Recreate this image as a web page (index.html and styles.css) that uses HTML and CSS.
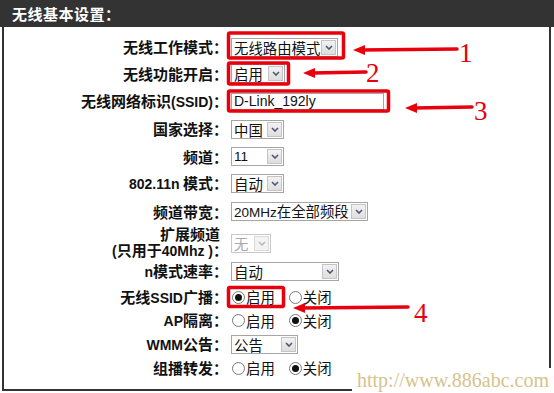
FILE: index.html
```html
<!DOCTYPE html>
<html lang="zh-CN">
<head>
<meta charset="utf-8">
<title>无线基本设置</title>
<link rel="stylesheet" href="styles.css">
</head>
<body>
<div class="page">
  <div class="hdr">无线基本设置：</div>
  <div class="panel">
    <div class="row r26">
      <div class="lbl">无线工作模式：</div>
      <div class="ctl"><div class="sel w107"><span class="val">无线路由模式</span><span class="btn"><svg viewBox="0 0 8 5"><path d="M1 1l3 3 3-3"/></svg></span></div></div>
    </div>
    <div class="row r27">
      <div class="lbl">无线功能开启：</div>
      <div class="ctl"><div class="sel w54"><span class="val">启用</span><span class="btn"><svg viewBox="0 0 8 5"><path d="M1 1l3 3 3-3"/></svg></span></div></div>
    </div>
    <div class="row r28">
      <div class="lbl">无线网络标识<span class="la">(SSID)</span>：</div>
      <div class="ctl"><div class="inp"><span class="lt">D-Link_192ly</span></div></div>
    </div>
    <div class="row r28">
      <div class="lbl">国家选择：</div>
      <div class="ctl"><div class="sel w53"><span class="val">中国</span><span class="btn"><svg viewBox="0 0 8 5"><path d="M1 1l3 3 3-3"/></svg></span></div></div>
    </div>
    <div class="row r27">
      <div class="lbl">频道：</div>
      <div class="ctl"><div class="sel w53"><span class="val lt">11</span><span class="btn"><svg viewBox="0 0 8 5"><path d="M1 1l3 3 3-3"/></svg></span></div></div>
    </div>
    <div class="row r27">
      <div class="lbl"><span class="la">802.11n</span> 模式：</div>
      <div class="ctl"><div class="sel w53"><span class="val">自动</span><span class="btn"><svg viewBox="0 0 8 5"><path d="M1 1l3 3 3-3"/></svg></span></div></div>
    </div>
    <div class="row r29">
      <div class="lbl">频道带宽：</div>
      <div class="ctl"><div class="sel w137"><span class="val"><span class="lt">20MHz</span>在全部频段</span><span class="btn"><svg viewBox="0 0 8 5"><path d="M1 1l3 3 3-3"/></svg></span></div></div>
    </div>
    <div class="row r31">
      <div class="lbl two"><span class="l1">扩展频道</span><span class="l2"><span class="la">(</span>只用于<span class="la">40Mhz )</span>：</span></div>
      <div class="ctl"><div class="sel w40 dis"><span class="val">无</span><span class="btn"><svg viewBox="0 0 8 5"><path d="M1 1l3 3 3-3"/></svg></span></div></div>
    </div>
    <div class="row r28">
      <div class="lbl"><span class="la">n</span>模式速率：</div>
      <div class="ctl"><div class="sel w108"><span class="val">自动</span><span class="btn"><svg viewBox="0 0 8 5"><path d="M1 1l3 3 3-3"/></svg></span></div></div>
    </div>
    <div class="row r24">
      <div class="lbl">无线<span class="la">SSID</span>广播：</div>
      <div class="ctl radios">
        <label class="opt"><span class="rad on"></span>启用</label>
        <label class="opt"><span class="rad"></span>关闭</label>
      </div>
    </div>
    <div class="row r23">
      <div class="lbl"><span class="la">AP</span>隔离：</div>
      <div class="ctl radios">
        <label class="opt"><span class="rad"></span>启用</label>
        <label class="opt"><span class="rad on"></span>关闭</label>
      </div>
    </div>
    <div class="row r24">
      <div class="lbl"><span class="la">WMM</span>公告：</div>
      <div class="ctl"><div class="sel w67"><span class="val">公告</span><span class="btn"><svg viewBox="0 0 8 5"><path d="M1 1l3 3 3-3"/></svg></span></div></div>
    </div>
    <div class="row r24">
      <div class="lbl">组播转发：</div>
      <div class="ctl radios">
        <label class="opt"><span class="rad"></span>启用</label>
        <label class="opt"><span class="rad on"></span>关闭</label>
      </div>
    </div>
  </div>

  <svg class="anno" width="554" height="393" viewBox="0 0 554 393">
    <g fill="none" stroke="#e8000c" stroke-width="3.5">
      <rect x="228.5" y="33" width="115" height="25" rx="1.5"/>
      <rect x="228.5" y="63" width="60" height="21" rx="1.5"/>
      <rect x="228.5" y="91" width="160" height="20" rx="1.5"/>
      <rect x="228.5" y="287.5" width="55" height="19" rx="1.5"/>
    </g>
    <g stroke="#e8000c" stroke-width="3.5" stroke-linecap="round">
      <line x1="362" y1="50" x2="457" y2="49"/>
      <line x1="312" y1="73" x2="366" y2="72"/>
      <line x1="414" y1="108" x2="472" y2="107"/>
      <line x1="302" y1="308" x2="408" y2="307"/>
    </g>
    <g fill="#e8000c">
      <path d="M353 50 L365 45 L365 55 Z"/>
      <path d="M303 73 L315 68 L315 78 Z"/>
      <path d="M405 108 L417 103 L417 113 Z"/>
      <path d="M293 308 L305 303 L305 313 Z"/>
    </g>
    <g class="num" fill="#e8000c">
      <text x="459" y="62">1</text>
      <text x="366" y="82">2</text>
      <text x="474" y="120">3</text>
      <text x="414" y="322">4</text>
    </g>
  </svg>

  <div class="wm">http://www.886abc.com</div>
</div>
</body>
</html>
```

FILE: styles.css
```css
html, body {
  margin: 0;
  padding: 0;
  background: #ffffff;
}

.page {
  position: relative;
  width: 554px;
  height: 393px;
  overflow: hidden;
  font-family: "Liberation Sans", "Noto Sans CJK SC", sans-serif;
  color: #000;
}

.hdr {
  height: 27px;
  background: #333333;
  color: #ffffff;
  font-family: "Noto Sans CJK SC", sans-serif;
  font-weight: bold;
  font-size: 15px;
  line-height: 28px;
  padding-left: 12px;
  box-sizing: border-box;
  letter-spacing: 0.5px;
}

.panel {
  margin-left: 2px;
  width: 549px;
  box-sizing: border-box;
  border-left: 2px solid #333;
  border-right: 2px solid #333;
  border-bottom: 2px solid #333;
  padding: 7px 0 9px 0;
  display: flex;
  flex-direction: column;
}

.row {
  display: grid;
  grid-template-columns: 224px auto;
  column-gap: 3px;
  align-items: center;
}
.r23 { height: 23px; }
.r24 { height: 24px; }
.r26 { height: 26px; }
.r27 { height: 27px; }
.r28 { height: 28px; }
.r29 { height: 29px; }
.r31 { height: 31px; }

.lbl {
  text-align: right;
  font-family: "Noto Sans CJK SC", sans-serif;
  font-weight: bold;
  font-size: 15px;
  line-height: 18px;
  white-space: nowrap;
  color: #111;
}
.lbl .la {
  font-family: "Liberation Sans", sans-serif;
  font-size: 14px;
  font-weight: bold;
}
.lbl.two {
  display: flex;
  flex-direction: column;
  align-items: flex-end;
  line-height: 16px;
  margin-bottom: 2px;
}
.lbl.two .l1 { padding-right: 8px; }

.ctl {
  display: flex;
  align-items: center;
}

.sel {
  display: flex;
  align-items: center;
  height: 19px;
  box-sizing: border-box;
  border: 1px solid #a5a5a5;
  background: #fff;
}
.w40 { width: 40px; }
.w53 { width: 53px; }
.w54 { width: 54px; }
.w67 { width: 67px; }
.w107 { width: 107px; }
.w108 { width: 108px; }
.w137 { width: 137px; }

.val {
  flex: 1;
  min-width: 0;
  padding-left: 2px;
  font-family: "Noto Sans CJK SC", sans-serif;
  font-size: 14.4px;
  line-height: 17px;
  white-space: nowrap;
  color: #111;
}
.lt {
  font-family: "Liberation Sans", sans-serif;
  font-size: 13.5px;
}
.btn {
  flex: none;
  width: 15px;
  height: 15px;
  margin: 1px;
  box-sizing: border-box;
  border: 1px solid #c4c4c4;
  background: linear-gradient(#f2f2f2, #dedede);
  display: flex;
  align-items: center;
  justify-content: center;
}
.btn svg {
  width: 8px;
  height: 5px;
}
.btn path {
  fill: none;
  stroke: #4b5872;
  stroke-width: 1.6;
}
.sel.dis { border-color: #c8c8c8; }
.sel.dis .val { color: #a8a8a8; }
.sel.dis .btn { border-color: #dadada; background: #f3f3f3; }
.sel.dis .btn path { stroke: #b8b8b8; }

.inp {
  width: 153px;
  height: 17px;
  box-sizing: border-box;
  border: 1px solid #a5a5a5;
  padding-left: 2px;
  display: flex;
  align-items: center;
  line-height: 15px;
  color: #111;
}
.inp .lt { font-size: 14px; }

.radios {
  gap: 14px;
  padding-left: 1px;
}
.opt {
  display: flex;
  align-items: center;
  font-family: "Noto Sans CJK SC", sans-serif;
  font-size: 14.4px;
  line-height: 18px;
  color: #111;
}
.rad {
  width: 13px;
  height: 13px;
  box-sizing: border-box;
  border: 1px solid #7a7a7a;
  border-radius: 50%;
  background: #fff;
  margin-right: 1px;
  display: flex;
  align-items: center;
  justify-content: center;
}
.rad.on::after {
  content: "";
  width: 7px;
  height: 7px;
  border-radius: 50%;
  background: #111;
}

.anno {
  position: absolute;
  left: 0;
  top: 0;
  pointer-events: none;
}
.num text {
  font-family: "Liberation Serif", serif;
  font-size: 27px;
}

.wm {
  position: absolute;
  left: 352px;
  top: 368px;
  width: 202px;
  height: 25px;
  background: #fff;
  padding-left: 5px;
  box-sizing: border-box;
  font-family: "Liberation Serif", serif;
  font-size: 20px;
  line-height: 24px;
  color: #d6c38c;
  white-space: nowrap;
}
```
